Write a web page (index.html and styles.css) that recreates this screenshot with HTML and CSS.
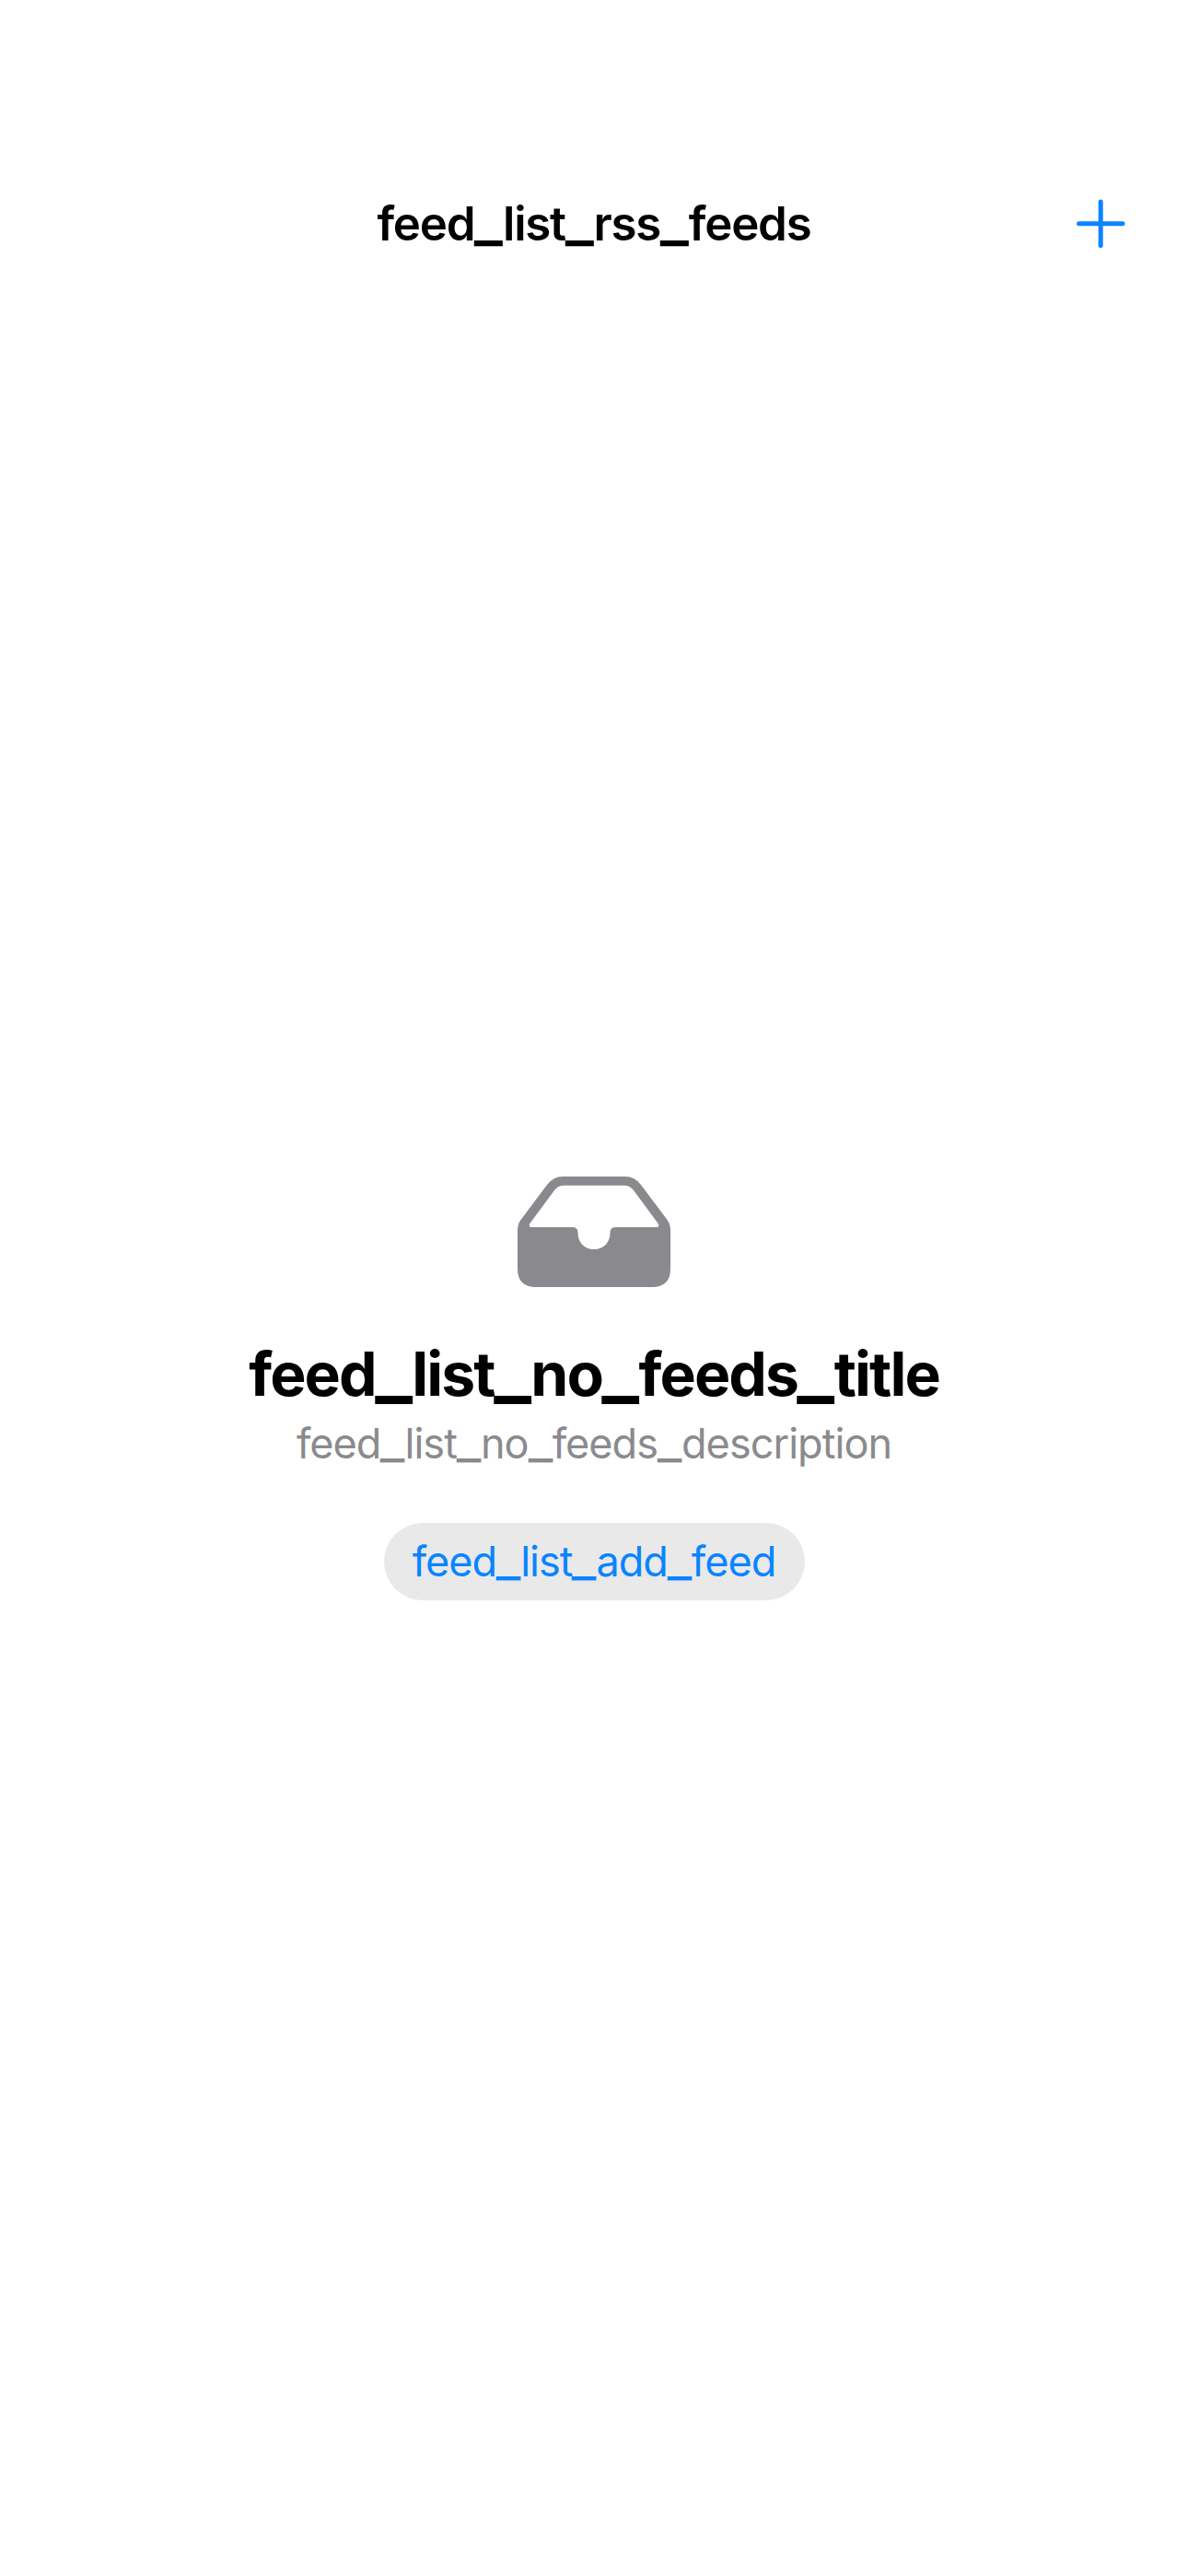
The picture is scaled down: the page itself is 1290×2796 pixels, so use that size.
FILE: index.html
```html
<!DOCTYPE html>
<html lang="en">
<head>
<meta charset="utf-8">
<title>Feeds</title>
<link rel="stylesheet" href="styles.css">
</head>
<body>
<header class="navbar">
  <h1 class="navbar-title">feed<span class="u">_</span>list<span class="u">_</span>rss<span class="u">_</span>feeds</h1>
  <button class="add" aria-label="Add"><svg width="54" height="54" viewBox="0 0 54 54"><path d="M27.2 3V50.4M3.6 26.7H51" fill="none" stroke="#0a84ff" stroke-width="5" stroke-linecap="round"/></svg></button>
</header>
<main class="empty">
  <svg class="tray" width="166" height="120" viewBox="0 0 166 120"><path fill="#8a8a8e" fill-rule="evenodd" d="M49 0H117Q127 0 134 9L162.500 47Q166 52 166 58V100Q166 120 146 120H20Q0 120 0 100V58Q0 52 3.500 47L32 9Q39 0 49 0ZM50 9.700Q44 9.700 40 15L13 51.500Q12 55 15 55H60Q65.500 55 65.500 61C65.500 72 73 79 83 79S100.500 72 100.500 61Q100.500 55 106 55H151Q154 55 153 51.500L126 15Q122 9.700 116 9.700Z"/></svg>
  <h2 class="title">feed<span class="u">_</span>list<span class="u">_</span>no<span class="u">_</span>feeds<span class="u">_</span>title</h2>
  <p class="description">feed<span class="u">_</span>list<span class="u">_</span>no<span class="u">_</span>feeds<span class="u">_</span>description</p>
  <button class="action">feed<span class="u">_</span>list<span class="u">_</span>add<span class="u">_</span>feed</button>
</main>
</body>
</html>
```
FILE: styles.css
```css
body {
  margin: 0;
  height: 2796px;
  display: flex;
  flex-direction: column;
  background: #fff;
  font-family: Inter, sans-serif;
}
h1, h2, p { margin: 0; }
button { border: 0; padding: 0; background: none; font-family: inherit; }
svg { display: block; }
/* wide underscores that reach the neighbouring letters */
.u {
  display: inline-block;
  width: 0.6em;
  text-align: center;
  letter-spacing: 0;
  transform: scale(1.3, 1.2);
  transform-origin: 50% 80%;
}
.description .u, .action .u { width: 0.578em; }
.navbar {
  display: grid;
  grid-template-columns: 54px 1fr 54px;
  align-items: center;
  height: 132px;
  padding: 177px 68px 0;
}
.navbar-title {
  grid-column: 2;
  text-align: center;
  font-size: 51px;
  font-weight: 600;
  line-height: 66px;
  letter-spacing: -1.2px;
}
.empty {
  display: flex;
  flex-direction: column;
  align-items: center;
  padding-top: 968px;
}
.title { margin-top: 54px; font-size: 66px; line-height: 80px; font-weight: 700; letter-spacing: -1.9px; }
.description { margin-top: 6px; font-size: 45px; line-height: 60px; color: #8a8a8e; letter-spacing: -0.95px; }
.action {
  margin-top: 56px;
  width: 457px;
  height: 84px;
  padding-bottom: 2px;
  border-radius: 42px;
  background: #e9e9e9;
  color: #0a84ff;
  font-size: 45px;
  letter-spacing: -1px;
}
```
